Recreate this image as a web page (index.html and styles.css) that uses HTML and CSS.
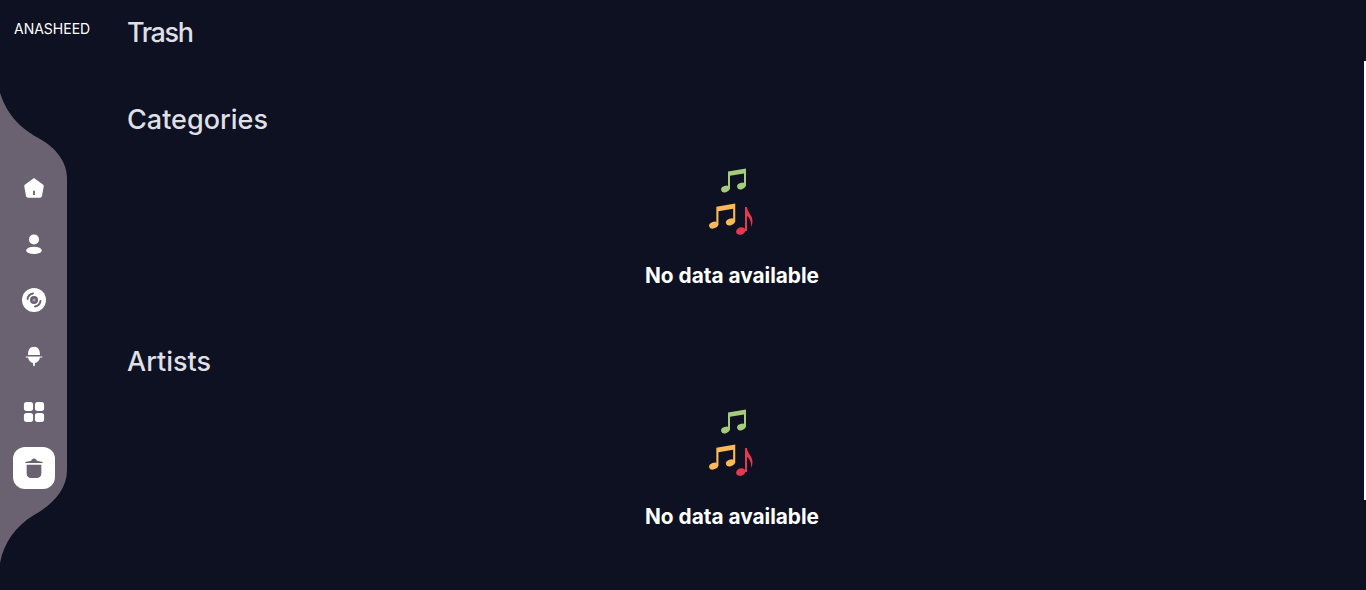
FILE: index.html
```html
<!DOCTYPE html>
<html>
<head>
    <meta charset="utf-8">
    <title>Trash</title>
    <link rel="stylesheet" href="styles.css">
</head>
<body>
<svg width="0" height="0" class="defs">
    <defs>
        <g id="pair">
            <path d="M7 3.500 L25 .5 V18 H23 V5.500 L9 7.800 V21 H7 Z"/>
            <ellipse cx="4.400" cy="21" rx="4.400" ry="3.100" transform="rotate(-20 4.400 21)"/>
            <ellipse cx="20.400" cy="18" rx="4.400" ry="3.100" transform="rotate(-20 20.400 18)"/>
        </g>
        <g id="notes">
            <use href="#pair" fill="#a4cc7c" transform="translate(16,2)"/>
            <use href="#pair" fill="#fdb857" transform="translate(4,37) scale(1.050)"/>
            <g fill="#e8384f">
                <path d="M40 41 H42 C42 46 47.500 49 47.500 55 C47.500 57 47 59 46 61 C46.500 56 45 52 42 50 V65 H40 Z"/>
                <ellipse cx="35.800" cy="65" rx="4.800" ry="3.700" transform="rotate(-20 35.800 65)"/>
            </g>
        </g>
    </defs>
</svg>

<div class="app">
    <nav class="sidebar">
        <div class="logo">ANASHEED</div>
        <svg class="wave" width="67" height="590" viewBox="0 0 67 590">
            <path fill="#6b6271" d="M0 93 C8 117 22 129 40 139 C56 148 67 162 67 178 V470 C67 490 52 505 34 515 C16 526 4 542 0 563 Z"/>
        </svg>
        <ul class="menu">
            <li class="menu-item">
                <svg width="24" height="24" viewBox="0 0 24 24"><path fill="#fff" fill-rule="evenodd" d="M12 1 L22 8.500 C22.600 9 22.800 9.500 22.600 10.200 L20.800 20.500 C20.600 21.800 19.800 22.500 18.500 22.500 H5.500 C4.200 22.500 3.400 21.800 3.200 20.500 L1.400 10.200 C1.200 9.500 1.400 9 2 8.500 Z M11 15 V19.500 H13 V15 Z"/></svg>
            </li>
            <li class="menu-item">
                <svg width="24" height="24" viewBox="0 0 24 24"><circle fill="#fff" cx="12" cy="7" r="5.500"/><ellipse fill="#fff" cx="12" cy="19" rx="8.500" ry="4"/></svg>
            </li>
            <li class="menu-item disc">
                <svg width="24" height="24" viewBox="0 0 24 24"><circle fill="#fff" cx="12" cy="12" r="12"/><circle fill="#6b6271" cx="12" cy="12" r="4"/><circle fill="#a59fa9" cx="12" cy="12" r="1.500"/><path fill="none" stroke="#6b6271" stroke-width="1.800" stroke-linecap="round" d="M5.500 11 C6 8 8 6 11 5.500 M18.500 13 C18 16 16 18 13 18.500"/></svg>
            </li>
            <li class="menu-item">
                <svg width="24" height="24" viewBox="0 0 24 24"><path fill="#fff" d="M5.500 10 C5.500 5 8 2 12 2 C16 2 18.500 5 18.500 10 V11 H5.500 Z M3 12.500 H21 V13.500 H18.500 C18 17 15.500 19 13 19.500 V22 L12 23.500 L11 22 V19.500 C8.500 19 6 17 5.500 13.500 H3 Z"/></svg>
            </li>
            <li class="menu-item">
                <svg width="24" height="24" viewBox="0 0 24 24"><rect fill="#fff" x="1" y="1" width="10" height="10" rx="3"/><rect fill="#fff" x="13" y="1" width="10" height="10" rx="3"/><rect fill="#fff" x="1" y="13" width="10" height="10" rx="3"/><rect fill="#fff" x="13" y="13" width="10" height="10" rx="3"/></svg>
            </li>
            <li class="menu-item active">
                <svg width="24" height="24" viewBox="0 0 24 24"><path fill="#6b6271" d="M9 4 C9 2.500 10.500 1.500 12 1.500 C13.500 1.500 15 2.500 15 4 L21.500 5.500 V6.500 H2.500 V5.500 Z M4 8.500 H20 V18 C20 21 18 23 15 23 H9 C6 23 4 21 4 18 Z"/></svg>
            </li>
        </ul>
    </nav>

    <main class="content">
        <h1 class="page-title">Trash</h1>

        <section class="group">
            <h2>Categories</h2>
            <div class="empty">
                <svg width="50" height="72" viewBox="0 0 50 72"><use href="#notes"/></svg>
                <p>No data available</p>
            </div>
        </section>

        <section class="group">
            <h2>Artists</h2>
            <div class="empty">
                <svg width="50" height="72" viewBox="0 0 50 72"><use href="#notes"/></svg>
                <p>No data available</p>
            </div>
        </section>
    </main>

    <div class="scroll-edge"></div>
</div>
</body>
</html>
```

FILE: styles.css
```css
html, body {
    height: 100%;
}

body {
    margin: 0;
    background-color: #0d1121;
    color: #fff;
    font-family: "Inter", "Noto Sans", sans-serif;
    overflow: hidden;
}

.defs {
    position: absolute;
}

.app {
    display: flex;
    height: 590px;
    position: relative;
}

.sidebar {
    width: 127px;
    flex-shrink: 0;
    position: relative;
}

.logo {
    padding: 20px 0 0 14px;
    font-size: 14px;
    line-height: 17px;
}

.wave {
    position: absolute;
    top: 0;
    left: 0;
}

.menu {
    position: relative;
    list-style: none;
    margin: 130px 0 0 13px;
    padding: 0;
    display: flex;
    flex-direction: column;
    gap: 14px;
}

.menu-item {
    width: 42px;
    height: 42px;
    display: flex;
    align-items: center;
    justify-content: center;
    border-radius: 12px;
}

.menu-item svg {
    width: 22px;
    height: 22px;
}

.menu-item.disc svg {
    width: 24px;
    height: 24px;
}

.menu-item.active {
    background-color: #fff;
}

.content {
    width: 1210px;
}

.page-title, .group h2 {
    margin: 0;
    font-size: 27px;
    font-weight: 500;
    line-height: 32px;
    color: #dfdfe5;
}

.page-title {
    padding-top: 17px;
    letter-spacing: -1.400px;
}

.group {
    margin-top: 55px;
}

.group + .group {
    margin-top: 56px;
}

.group + .group .empty {
    padding-top: 29px;
}

.empty {
    display: flex;
    flex-direction: column;
    align-items: center;
    padding-top: 30px;
}

.empty svg {
    display: block;
    margin-left: -4px;
}

.empty p {
    margin: 24px 0 0;
    font-size: 20.800px;
    line-height: 28px;
    font-weight: 700;
    color: #fff;
}

.scroll-edge {
    position: absolute;
    top: 61px;
    right: 0;
    width: 2px;
    height: 439px;
    background-color: #fff;
}
```
